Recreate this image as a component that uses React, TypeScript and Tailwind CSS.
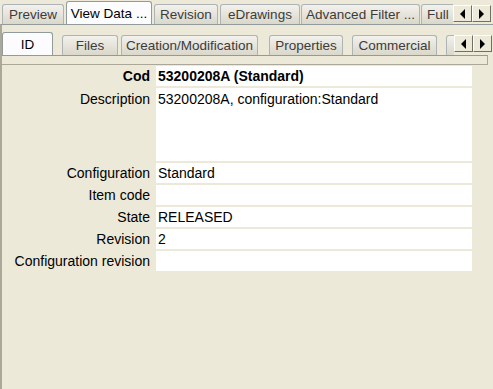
import React from 'react';

type Tab = { label: string; w: string; ml: string; active?: boolean };

const topTabs: Tab[] = [
    { label: 'Preview', w: 'w-[62px]', ml: 'ml-[2px]' },
    { label: 'View Data ...', w: 'w-[86px]', ml: 'ml-[2px]', active: true },
    { label: 'Revision', w: 'w-[64px]', ml: 'ml-[2px]' },
    { label: 'eDrawings', w: 'w-[80px]', ml: 'ml-[2px]' },
    { label: 'Advanced Filter ...', w: 'w-[119px]', ml: 'ml-[1px]' },
    { label: 'Full', w: 'w-[40px] justify-start pl-[5px]', ml: 'ml-[1px]' },
];

const subTabs: Tab[] = [
    { label: 'ID', w: 'w-[51px]', ml: 'ml-0', active: true },
    { label: 'Files', w: 'w-[56px]', ml: 'ml-[9px]' },
    { label: 'Creation/Modification', w: 'w-[137px]', ml: 'ml-[3px]' },
    { label: 'Properties', w: 'w-[74px]', ml: 'ml-[11px]' },
    { label: 'Commercial', w: 'w-[85px]', ml: 'ml-[9px]' },
    { label: '', w: 'w-[20px]', ml: 'ml-[9px]' },
];

const rows = [
    { label: 'Cod', value: '53200208A (Standard)', bold: true },
    { label: 'Description', value: '53200208A, configuration:Standard', tall: true },
    { label: 'Configuration', value: 'Standard' },
    { label: 'Item code', value: '' },
    { label: 'State', value: 'RELEASED' },
    { label: 'Revision', value: '2' },
    { label: 'Configuration revision', value: '' },
];

const TabButton = ({ tab }: { tab: Tab }) =>
    tab.active ? (
        <div className={`${tab.w} ${tab.ml} shrink-0 h-[24px] -mb-px relative z-10 flex items-center justify-center bg-[#fcfcfe] border border-b-0 border-[#919b9c] rounded-t-[3px] text-black whitespace-nowrap`}>
            {tab.label}
        </div>
    ) : (
        <div className={`flex items-center justify-center ${tab.w} ${tab.ml} shrink-0 h-[20px] bg-gradient-to-b from-[#f2f1ec] to-[#dad7cb] border border-b-0 border-[#aeb4b5] rounded-t-[3px] text-[#3c3c3c] whitespace-nowrap`}>
            {tab.label}
        </div>
    );

const ScrollArrows = () => (
    <div className="flex shrink-0 self-center">
        <button className="w-[19px] h-[17px] flex items-center justify-center bg-[#ece9d8] border border-t-white border-l-white border-r-[#716f64] border-b-[#716f64]">
            <span className="w-0 h-0 border-y-[5px] border-y-transparent border-r-[5px] border-r-black" />
        </button>
        <button className="w-[19px] h-[17px] flex items-center justify-center bg-[#ece9d8] border border-t-white border-l-white border-r-[#716f64] border-b-[#716f64]">
            <span className="w-0 h-0 border-y-[5px] border-y-transparent border-l-[5px] border-l-black" />
        </button>
    </div>
);

export default function App() {
    return (
        <div className="w-[493px] h-[389px] bg-[#ece9d8] overflow-hidden text-[13.5px] leading-none font-['Liberation_Sans',Arial,sans-serif] flex flex-col">
            {/* Top tab strip */}
            <div className="flex items-end h-[24px] pr-[2px]">
                <div className="flex items-end flex-1 overflow-hidden h-full">
                    {topTabs.map((t) => (
                        <TabButton key={t.label} tab={t} />
                    ))}
                </div>
                <div className="self-end mb-[2px]">
                    <ScrollArrows />
                </div>
            </div>

            {/* Outer page */}
            <div className="flex-1 flex flex-col border-t border-t-[#919b9c] border-l-2 border-l-[#aca899]">
                {/* Sub tab strip */}
                <div className="flex items-end h-[30px] pr-[1px]">
                    <div className="flex items-end flex-1 overflow-hidden h-full">
                        {subTabs.map((t, i) => (
                            <TabButton key={i} tab={t} />
                        ))}
                    </div>
                    <div className="self-end mb-[3px]">
                        <ScrollArrows />
                    </div>
                </div>

                {/* Inner page top strip */}
                <div className="h-[10px] mr-[5px] border-t border-t-[#919b9c] border-b border-b-[#aca899] border-r border-r-[#aca899]" />

                {/* Fields */}
                <div className="grid grid-cols-[148px_316px] gap-x-[6px] gap-y-[2px] mt-[1px] text-[14px]">
                    {rows.map((r) => (
                        <React.Fragment key={r.label}>
                            <div className={`text-right text-black whitespace-nowrap ${r.tall ? 'pt-[4px] h-[73px]' : 'h-[20px] flex items-center justify-end'} ${r.bold ? 'font-bold' : ''}`}>
                                {r.label}
                            </div>
                            <div className={`bg-white text-black pl-[2px] ${r.tall ? 'pt-[4px] h-[73px]' : 'h-[20px] flex items-center'} ${r.bold ? 'font-bold' : ''}`}>
                                {r.value}
                            </div>
                        </React.Fragment>
                    ))}
                </div>
            </div>
        </div>
    );
}
